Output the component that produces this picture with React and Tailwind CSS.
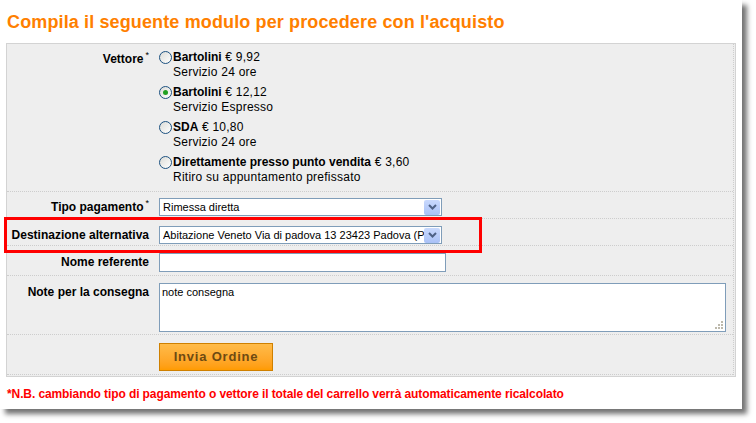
function Star() {
  return <span className="align-top text-[9px] leading-[10px] font-normal ml-[2px]">*</span>
}

function Radio({ checked }) {
  return (
    <span className="mt-[1px] flex h-[13px] w-[13px] shrink-0 items-center justify-center rounded-full border border-[#1c5180] bg-gradient-to-br from-[#dcdcd7] to-white">
      {checked && <span className="h-[5px] w-[5px] rounded-full bg-[#21a121]" />}
    </span>
  )
}

function Option({ name, price, note, checked }) {
  return (
    <div className="flex gap-px leading-[15px]">
      <Radio checked={checked} />
      <div className="tracking-[0.25px]">
        <div>
          <b className="tracking-normal">{name}</b> € {price}
        </div>
        <div>{note}</div>
      </div>
    </div>
  )
}

function Select({ value }) {
  return (
    <div className="flex h-[18px] w-[283px] items-center border border-[#7f9db9] bg-white pl-[3px] pr-px text-[11px]">
      <span className="flex-1 overflow-hidden whitespace-nowrap leading-[16px]">{value}</span>
      <span className="flex h-[15px] w-[16px] shrink-0 items-center justify-center rounded-[2px] bg-gradient-to-b from-[#c9d9fd] to-[#a9c1f6]">
        <svg width="9" height="6" viewBox="0 0 9 6">
          <path d="M1 1 L4.5 4.5 L8 1" fill="none" stroke="#4d6185" strokeWidth="2" />
        </svg>
      </span>
    </div>
  )
}

function Row({ label, h, pt, children }) {
  return (
    <div className={`flex ${h} ${pt} border-b border-dotted border-[#cdcdcd]`}>
      <div className="w-[152px] shrink-0 pr-[10px] text-right font-bold">{label}</div>
      <div className="flex-1">{children}</div>
    </div>
  )
}

export default function App() {
  return (
    <div className="min-h-[423px] bg-white font-['Liberation_Sans',Arial,sans-serif] text-[12px] text-black">
      <div className="relative h-[409px] w-[742px] bg-white pt-[11px] shadow-[5px_5px_5px_rgba(0,0,0,0.55)]">
        <h1 className="pl-[7px] text-[18px] font-bold leading-[22px] tracking-[0.13px] text-[#ff7f00]">
          Compila il seguente modulo per procedere con l'acquisto
        </h1>

        <div className="ml-[6px] mt-[10px] w-[730px] border border-[#d3d3d3] bg-[#eeeeee] pb-px pr-px">
          <div className="border-r border-dotted border-[#cdcdcd]">
            <Row h="h-[148px]" pt="pt-[6px]" label={<span className="leading-[15px]">Vettore<Star /></span>}>
              <div className="flex flex-col gap-[5px]">
                <Option name="Bartolini" price="9,92" note="Servizio 24 ore" />
                <Option name="Bartolini" price="12,12" note="Servizio Espresso" checked />
                <Option name="SDA" price="10,80" note="Servizio 24 ore" />
                <Option
                  name="Direttamente presso punto vendita"
                  price="3,60"
                  note="Ritiro su appuntamento prefissato"
                />
              </div>
            </Row>

            <Row h="h-[27px]" pt="pt-[6px]" label={<span className="leading-[18px]">Tipo pagamento<Star /></span>}>
              <Select value="Rimessa diretta" />
            </Row>

            <Row h="h-[27px]" pt="pt-[7px]" label={<span className="leading-[18px]">Destinazione alternativa</span>}>
              <Select value="Abitazione Veneto Via di padova 13 23423 Padova (PD)" />
            </Row>

            <Row h="h-[30px]" pt="pt-[7px]" label={<span className="leading-[19px]">Nome referente</span>}>
              <div className="h-[19px] w-[287px] border border-[#7f9db9] bg-white" />
            </Row>

            <Row h="h-[59px]" pt="pt-[7px]" label={<span className="leading-[16px]">Note per la consegna</span>}>
              <div className="relative h-[49px] w-[567px] border border-[#7f9db9] bg-white px-[2px] pt-[2px] text-[11px] leading-[13px]">
                note consegna
                <svg className="absolute bottom-[2px] right-[2px]" width="8" height="8" viewBox="0 0 8 8">
                  <rect x="6" y="0" width="2" height="2" fill="#bdb9ac" />
                  <rect x="3" y="3" width="2" height="2" fill="#bdb9ac" />
                  <rect x="6" y="3" width="2" height="2" fill="#bdb9ac" />
                  <rect x="0" y="6" width="2" height="2" fill="#bdb9ac" />
                  <rect x="3" y="6" width="2" height="2" fill="#bdb9ac" />
                  <rect x="6" y="6" width="2" height="2" fill="#bdb9ac" />
                </svg>
              </div>
            </Row>

            <Row h="h-[40px]" pt="pt-[8px]" label="">
              <button className="h-[28px] w-[114px] border border-[#cf8000] bg-gradient-to-b from-[#ffbb48] to-[#ff9b00] text-[13px] font-bold tracking-[0.8px] text-[#6e4a12]">
                Invia Ordine
              </button>
            </Row>
          </div>
        </div>

        <p className="mt-[10px] pl-[7px] text-[12px] font-bold leading-[15px] tracking-[-0.1px] text-[#ff0000]">
          *N.B. cambiando tipo di pagamento o vettore il totale del carrello verrà automaticamente ricalcolato
        </p>

        <div className="absolute left-[4px] top-[217px] h-[36px] w-[478px] border-[3px] border-[#ff0000]" />
      </div>
    </div>
  )
}
